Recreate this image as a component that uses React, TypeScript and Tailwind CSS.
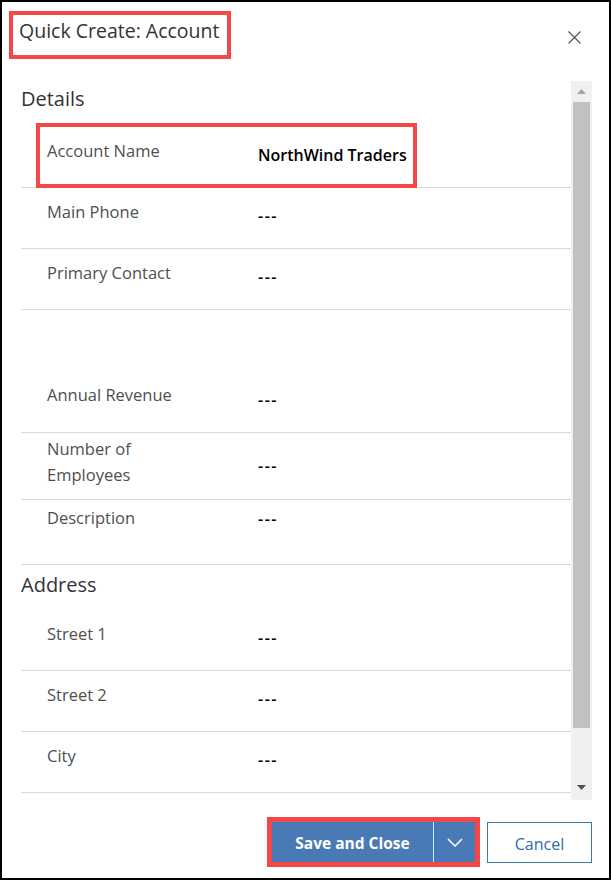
import React from "react";

type Field = {
  label: string;
  value: string;
  h: string;
  labelPt: string;
  valueCls: string;
  highlight?: boolean;
};

const details: (Field | null)[] = [
  { label: "Account Name", value: "NorthWind Traders", h: "h-[61px]", labelPt: "pt-[11px]", valueCls: "self-center pb-[4px]", highlight: true },
  { label: "Main Phone", value: "---", h: "h-[61px]", labelPt: "pt-[11px]", valueCls: "self-center pb-[4px]" },
  { label: "Primary Contact", value: "---", h: "h-[61px]", labelPt: "pt-[11px]", valueCls: "self-center pb-[4px]" },
  null,
  { label: "Annual Revenue", value: "---", h: "h-[62px]", labelPt: "pt-[11px]", valueCls: "self-center pb-[4px]" },
  { label: "Number of Employees", value: "---", h: "h-[67px]", labelPt: "pt-[3px]", valueCls: "self-center" },
  { label: "Description", value: "---", h: "h-[65px]", labelPt: "pt-[5px]", valueCls: "self-start pt-[7px]" },
];

const address: Field[] = [
  { label: "Street 1", value: "---", h: "h-[61px]", labelPt: "pt-[11px]", valueCls: "self-center pb-[4px]" },
  { label: "Street 2", value: "---", h: "h-[61px]", labelPt: "pt-[11px]", valueCls: "self-center pb-[4px]" },
  { label: "City", value: "---", h: "h-[61px]", labelPt: "pt-[11px]", valueCls: "self-center pb-[4px]" },
];

const FieldRow = ({ f }: { f: Field }) => (
  <div className={`relative ml-[19px] flex border-b border-[#d9d9d9] ${f.h}`}>
    <div className={`w-[237px] shrink-0 pl-[26px] ${f.labelPt}`}>
      <div className="max-w-[140px] text-[16.5px] leading-[26px] text-[#4f4f4f]">{f.label}</div>
    </div>
    <div
      className={`text-[16px] font-semibold leading-[24px] text-black ${f.value === "---" ? "tracking-[1.5px]" : ""} ${f.valueCls}`}
    >
      {f.value}
    </div>
    {f.highlight && (
      <div className="pointer-events-none absolute left-[15px] top-[-4px] h-[65px] w-[381px] border-4 border-[#f44848]" />
    )}
  </div>
);

const Scrollbar = () => (
  <div className="flex w-[21px] shrink-0 flex-col bg-[#f0f0f0]">
    <div className="flex h-[21px] items-center justify-center">
      <svg width="9" height="5" viewBox="0 0 9 5">
        <polygon points="0,5 4.5,0 9,5" fill="#a3a3a3" />
      </svg>
    </div>
    <div className="mx-[2px] h-[626px] bg-[#c1c1c1]" />
    <div className="flex-1" />
    <div className="flex h-[21px] items-start justify-center pt-[6px]">
      <svg width="9" height="5" viewBox="0 0 9 5">
        <polygon points="0,0 9,0 4.5,5" fill="#505050" />
      </svg>
    </div>
  </div>
);

export default function App() {
  return (
    <div className="flex h-[880px] w-[611px] flex-col border-2 border-black bg-white font-['Open_Sans',sans-serif]">
      {/* header */}
      <div className="flex h-[79px] shrink-0 items-start justify-between">
        <div className="ml-[7px] mt-[9px] h-[48px] w-[222px] border-4 border-[#f44848] pl-[6px] pt-[2px]">
          <span className="text-[19.5px] leading-[28px] text-[#333]">Quick Create: Account</span>
        </div>
        <button className="mr-[28px] mt-[29px]">
          <svg width="13" height="13" viewBox="0 0 13 13">
            <path d="M0.5 0.5L12.5 12.5M12.5 0.5L0.5 12.5" stroke="#555" strokeWidth="1.2" />
          </svg>
        </button>
      </div>

      {/* body */}
      <div className="flex h-[719px] shrink-0 pr-[17px]">
        <div className="flex-1 overflow-hidden">
          <div className="h-[46px] pl-[19px] pt-[4px] text-[20px] leading-[28px] text-[#333]">Details</div>
          {details.map((f, i) => (f ? <FieldRow key={i} f={f} /> : <div key={i} className="h-[61px]" />))}
          <div className="h-[45px] pl-[19px] pt-[6px] text-[20px] leading-[28px] text-[#333]">Address</div>
          {address.map((f, i) => (
            <FieldRow key={i} f={f} />
          ))}
        </div>
        <Scrollbar />
      </div>

      {/* footer */}
      <div className="flex flex-1 items-start justify-end gap-[7px] pr-[17px] pt-[17px]">
        <div className="border-[5px] border-[#f44848]">
          <div className="flex h-[40px] w-[203px] bg-[#4a7ab5] text-white">
            <div className="flex w-[161px] items-center justify-center pt-[3px] text-[15.5px] font-bold">Save and Close</div>
            <div className="w-px bg-[#dfe8f3]" />
            <div className="w-px bg-[#2a7fd4]" />
            <div className="flex flex-1 items-center justify-center">
              <svg width="16" height="9" viewBox="0 0 16 9">
                <polyline points="1,1 8,8 15,1" fill="none" stroke="#fff" strokeWidth="1.5" />
              </svg>
            </div>
          </div>
        </div>
        <button className="mt-[5px] h-[41px] w-[105px] border border-[#3b79b7] pt-[2px] text-[16px] text-[#2f6cae]">Cancel</button>
      </div>
    </div>
  );
}
